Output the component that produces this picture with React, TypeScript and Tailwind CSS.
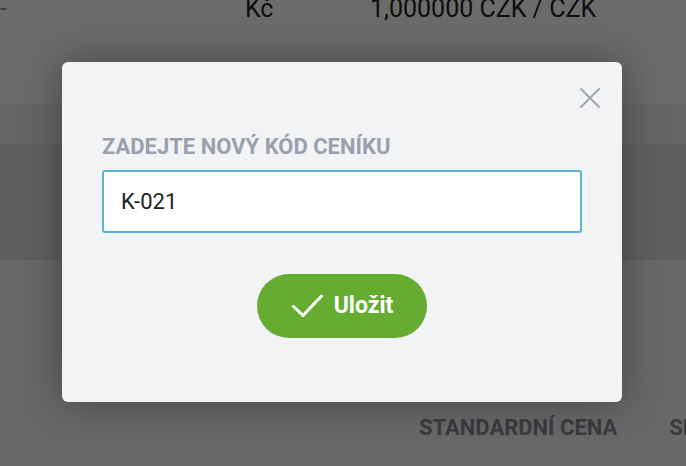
import { X } from "lucide-react";

const font = { fontFamily: "Roboto, 'Noto Sans', sans-serif" };

function CheckMark() {
	return (
		<svg width="32" height="24" viewBox="0 0 32 24" fill="none" stroke="currentColor" strokeWidth="3" strokeLinecap="round" strokeLinejoin="round">
			<polyline points="2.5,12.5 12,21.5 30.5,2" />
		</svg>
	);
}

function Backdrop() {
	return (
		<div className="flex flex-col h-[466px] text-[#1f1f1f]">
			<div className="h-[104px] bg-white">
				<div className="flex items-start -mt-[7px] text-[25px] leading-[32px] whitespace-nowrap">
					<span className="text-[#999] w-[245px]">-</span>
					<span className="w-[125px]">Kč</span>
					<span>1,000000 CZK / CZK</span>
				</div>
			</div>
			<div className="h-[40px] bg-[#eff1f1]" />
			<div className="h-[116px] bg-[#e2e4e6]" />
			<div className="flex-1 bg-[#f8f8f8] pt-[155px]">
				<div className="flex items-center text-[22px] font-bold text-[#8b8d99] leading-[26px] whitespace-nowrap">
					<span className="ml-[419px]">STANDARDNÍ CENA</span>
					<span className="ml-[52px]">SLEVA</span>
				</div>
			</div>
		</div>
	);
}

export default function App() {
	return (
		<div className="relative w-full h-[466px] overflow-hidden" style={font}>
			<Backdrop />
			<div className="absolute inset-0 bg-black/[0.58]" />
			<div className="absolute inset-0 pt-[62px] pl-[62px]">
				<div className="relative w-[560px] h-[340px] bg-[#f2f3f5] rounded-[6px] shadow-[0_0_40px_rgba(0,0,0,0.35)] px-10 pt-[72px]">
					<button type="button" className="absolute top-[18px] right-[14px] text-[#a3a7b0]">
						<X className="w-[36px] h-[36px]" strokeWidth={1.3} />
					</button>
					<label className="block text-[22px] leading-[26px] font-bold text-[#9aa0ae] whitespace-nowrap">
						ZADEJTE NOVÝ KÓD CENÍKU
					</label>
					<div className="mt-[10px] h-[63px] bg-white border-2 border-[#5cb2d6] rounded-[3px] flex items-center px-[17px] text-[22px] text-[#222]">
						K-021
					</div>
					<div className="flex justify-center mt-[41px]">
						<button
							type="button"
							className="w-[170px] h-[64px] rounded-full bg-[#65ac31] text-white flex items-center justify-center gap-[11px] text-[23px] font-bold"
						>
							<CheckMark />
							<span>Uložit</span>
						</button>
					</div>
				</div>
			</div>
		</div>
	);
}
